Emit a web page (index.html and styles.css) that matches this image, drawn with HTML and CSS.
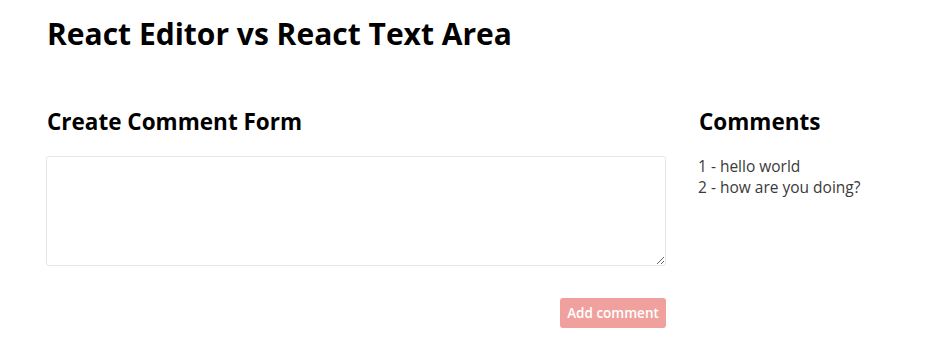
FILE: index.html
```html
<!DOCTYPE html>
<html lang="en">
<head>
    <meta charset="UTF-8">
    <meta name="viewport" content="width=device-width, initial-scale=1.0">
    <title>React Editor vs React Text Area</title>
    <link rel="stylesheet" href="styles.css">
</head>
<body>

<div class="container">
    <h1 class="title">React Editor vs React Text Area</h1>

    <div class="layout">
        <div class="form-col">
            <h2>Create Comment Form</h2>
            <form id="commentForm">
                <textarea id="comment" name="comment"></textarea>
                <div class="actions">
                    <button type="button" class="btn" disabled>Add comment</button>
                </div>
            </form>
        </div>

        <div class="comments-col">
            <h2>Comments</h2>
            <div class="comment">1 - hello world</div>
            <div class="comment">2 - how are you doing?</div>
        </div>
    </div>
</div>

</body>
</html>
```

FILE: styles.css
```css
body {
    font-family: "Open Sans", Arial, sans-serif;
    color: #212529;
    background-color: white;
    margin: 0;
}
.container {
    padding: 14px 47px 0 46px;
}
.title {
    font-size: 30px;
    font-weight: 700;
    color: #000;
    margin: 0 0 0 1px;
    line-height: 40px;
}
.layout {
    display: grid;
    grid-template-columns: 620px 1fr;
    column-gap: 32px;
    margin-top: 53px;
}
h2 {
    font-size: 22.5px;
    font-weight: 700;
    color: #000;
    margin: 0 0 19px 1px;
    line-height: 30px;
}
textarea {
    display: block;
    width: 100%;
    height: 110px;
    box-sizing: border-box;
    border: 1px solid #e6e6e6;
    border-radius: 3px;
    padding: 6px 10px;
    font-family: inherit;
    font-size: 14px;
    resize: vertical;
}
.actions {
    display: flex;
    justify-content: flex-end;
    margin-top: 32px;
}
.btn {
    width: 106px;
    height: 30px;
    padding: 0;
    background-color: #f0a19e;
    color: white;
    border: none;
    border-radius: 3px;
    font-family: inherit;
    font-size: 13.5px;
    font-weight: 600;
}
.comment {
    font-size: 15.5px;
    line-height: 21px;
    color: #3a3a3a;
}
```
